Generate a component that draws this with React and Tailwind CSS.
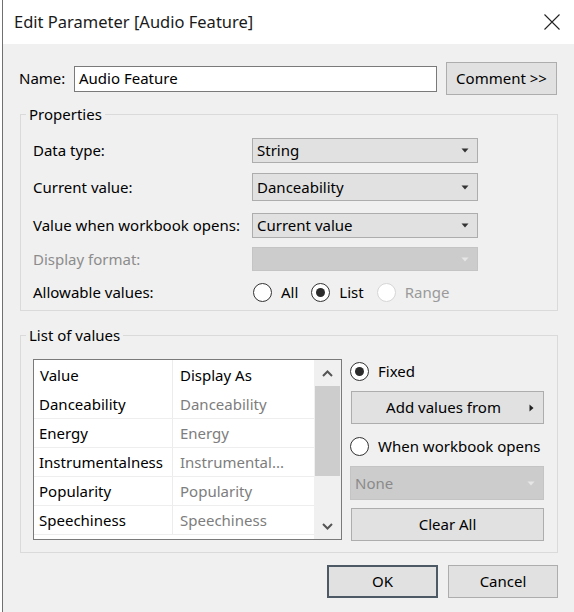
import React from "react";

const font = { fontFamily: '"Noto Sans", "Open Sans", sans-serif' };

function Caret({ disabled }) {
  return (
    <svg width="8" height="5" viewBox="0 0 8 5" className="shrink-0">
      <path d="M0.5 0.5 L7.5 0.5 L4 4.5 Z" fill={disabled ? "#e6e6e6" : "#333"} />
    </svg>
  );
}

function Dropdown({ value, disabled, className = "" }) {
  return (
    <div
      className={
        "flex items-center justify-between pl-[4px] pr-[8px] border " +
        (disabled
          ? "bg-[#cccccc] border-[#c4c4c4] text-[#8a8a8a] "
          : "bg-[#e1e1e1] border-[#adadad] text-black ") +
        className
      }
    >
      <span className="leading-none">{value}</span>
      <Caret disabled={disabled} />
    </div>
  );
}

function Radio({ checked, disabled, label }) {
  return (
    <div className="flex items-center gap-[9px]">
      <div
        className={
          "w-[19px] h-[19px] rounded-full border bg-white flex items-center justify-center " +
          (disabled ? "border-[#d6d6d6]" : "border-[#333333]")
        }
      >
        {checked && <div className="w-[9px] h-[9px] rounded-full bg-[#2b2b2b]" />}
      </div>
      <span className={disabled ? "text-[#9a9a9a]" : "text-black"}>{label}</span>
    </div>
  );
}

function Row({ label, children, className = "", labelClass = "" }) {
  return (
    <div className={"flex items-center h-[26px] " + className}>
      <div className={"w-[219px] " + labelClass}>{label}</div>
      {children}
    </div>
  );
}

const rows = [
  ["Danceability", "Danceability"],
  ["Energy", "Energy"],
  ["Instrumentalness", "Instrumental..."],
  ["Popularity", "Popularity"],
  ["Speechiness", "Speechiness"],
];

export default function App() {
  return (
    <div className="w-[574px] h-[612px] flex bg-white overflow-hidden text-[15px] text-black" style={font}>
      <div className="w-[2px] shrink-0 bg-white" />
      <div className="flex-1 flex flex-col border-l border-[#707070] bg-[#f0f0f0]">
        {/* Title bar */}
        <div className="h-[44px] bg-white flex items-center justify-between pl-[11px] pr-[15px] shrink-0">
          <span className="text-[16.5px] text-[#1a1a1a]">Edit Parameter [Audio Feature]</span>
          <svg width="16" height="16" viewBox="0 0 16 16">
            <path d="M0.5 0.5 L15.5 15.5 M15.5 0.5 L0.5 15.5" stroke="#222" strokeWidth="1.1" />
          </svg>
        </div>

        <div className="pl-[16px] pr-[17px]">
          {/* Name row */}
          <div className="flex items-center h-[33px] mt-[18px]">
            <span className="w-[55px]">Name:</span>
            <div className="w-[363px] h-[26px] bg-white border border-[#7a7a7a] flex items-center pl-[4px]">
              Audio Feature
            </div>
            <div className="ml-[9px] w-[111px] h-[33px] bg-[#e1e1e1] border border-[#adadad] flex items-center justify-center">
              Comment &gt;&gt;
            </div>
          </div>

          {/* Properties */}
          <fieldset className="ml-[1px] mt-[9px] border border-[#dadada] pl-[5px] pb-[5px]">
            <legend className="px-[3px] leading-[20px]">Properties</legend>
            <div className="pl-[7px] pr-[79px]">
              <Row label="Data type:" className="mt-[13px]">
                <Dropdown value="String" className="w-[226px] h-[25px]" />
              </Row>
              <Row label="Current value:" className="mt-[11px]">
                <Dropdown value="Danceability" className="w-[226px] h-[28px]" />
              </Row>
              <Row label="Value when workbook opens:" className="mt-[12px]">
                <Dropdown value="Current value" className="w-[226px] h-[25px]" />
              </Row>
              <Row label="Display format:" labelClass="text-[#8c8c8c]" className="mt-[8px]">
                <Dropdown value="" disabled className="w-[226px] h-[24px]" />
              </Row>
              <Row label="Allowable values:" className="mt-[7px]">
                <div className="flex items-center gap-[13px] ml-[1px]">
                  <Radio label="All" />
                  <Radio label="List" checked />
                  <Radio label="Range" disabled />
                </div>
              </Row>
            </div>
          </fieldset>

          {/* List of values */}
          <fieldset className="ml-[1px] mt-[14px] border border-[#dadada] pl-[5px] pb-[11px]">
            <legend className="px-[3px] leading-[20px]">List of values</legend>
            <div className="pl-[7px] mt-[14px] flex">
              <div className="w-[309px] h-[181px] bg-white border border-[#7a7a7a] flex overflow-hidden">
                <div className="w-[280px] flex flex-col">
                  <div className="h-[30px] flex items-center shrink-0">
                    <div className="w-[139px] h-full flex items-center pl-[6px] border-r border-[#ececec]">Value</div>
                    <div className="pl-[7px]">Display As</div>
                  </div>
                  {rows.map(([v, d]) => (
                    <div key={v} className="h-[29px] flex items-center shrink-0 border-b border-[#eeeeee]">
                      <div className="w-[139px] h-full flex items-center pl-[5px] border-r border-[#ececec]">{v}</div>
                      <div className="pl-[7px] text-[#7d7d7d]">{d}</div>
                    </div>
                  ))}
                </div>
                <div className="w-[27px] bg-[#f0f0f0] flex flex-col items-center">
                  <div className="h-[26px] flex items-center justify-center shrink-0">
                    <svg width="11" height="7" viewBox="0 0 11 7">
                      <path d="M1 6 L5.5 1.5 L10 6" fill="none" stroke="#555" strokeWidth="2" />
                    </svg>
                  </div>
                  <div className="w-[25px] h-[90px] bg-[#cdcdcd]" />
                  <div className="flex-1" />
                  <div className="h-[26px] flex items-center justify-center shrink-0">
                    <svg width="11" height="7" viewBox="0 0 11 7">
                      <path d="M1 1 L5.5 5.5 L10 1" fill="none" stroke="#555" strokeWidth="2" />
                    </svg>
                  </div>
                </div>
              </div>

              <div className="ml-[8px] w-[194px] flex flex-col">
                <div className="h-[24px] flex items-center mt-[0px]">
                  <Radio label="Fixed" checked />
                </div>
                <div className="mt-[8px] h-[33px] w-[193px] ml-[1px] bg-[#e1e1e1] border border-[#adadad] flex items-center relative">
                  <span className="flex-1 text-center pr-[8px]">Add values from</span>
                  <svg width="5" height="8" viewBox="0 0 5 8" className="absolute right-[9px]">
                    <path d="M0.5 0.5 L4.5 4 L0.5 7.5 Z" fill="#222" />
                  </svg>
                </div>
                <div className="h-[24px] flex items-center mt-[10px]">
                  <Radio label="When workbook opens" />
                </div>
                <Dropdown value="None" disabled className="mt-[8px] w-[194px] h-[34px]" />
                <div className="mt-[8px] h-[33px] w-[193px] ml-[1px] bg-[#e1e1e1] border border-[#adadad] flex items-center justify-center">
                  Clear All
                </div>
              </div>
            </div>
          </fieldset>

          {/* Buttons */}
          <div className="flex justify-end gap-[10px] mt-[12px]">
            <div className="w-[111px] h-[33px] bg-[#e1e1e1] border-2 border-[#4d5a66] flex items-center justify-center">OK</div>
            <div className="w-[110px] h-[33px] bg-[#e1e1e1] border border-[#adadad] flex items-center justify-center">Cancel</div>
          </div>
        </div>
      </div>
    </div>
  );
}
